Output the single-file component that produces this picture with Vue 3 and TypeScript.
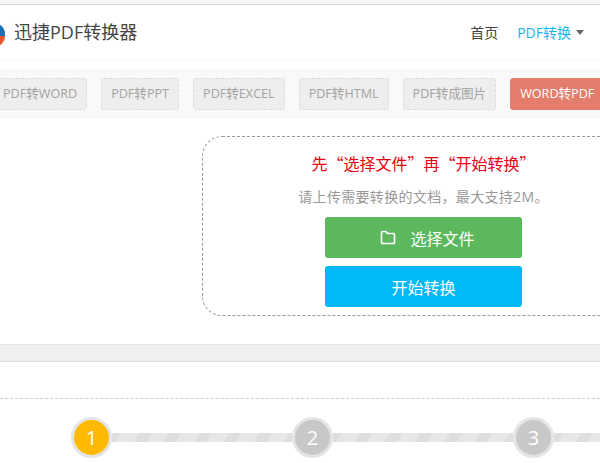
<script setup lang="ts">
const tabs = ['PDF转WORD', 'PDF转PPT', 'PDF转EXCEL', 'PDF转HTML', 'PDF转成图片']
const steps = [1, 2, 3]
</script>

<template>
  <div class="page">
    <div class="topbar"></div>
    <header class="header">
      <div class="brand">
        <svg class="logo" width="22" height="22" viewBox="0 0 22 22">
          <circle cx="11" cy="11" r="11" fill="#1a6fb5" />
          <path d="M0 13 A11 11 0 0 0 22 13 Z" fill="#e4572e" />
          <circle cx="11" cy="10" r="6.5" fill="#1a6fb5" />
        </svg>
        <span class="title">迅捷PDF转换器</span>
      </div>
      <nav class="nav">
        <span class="nav-home">首页</span>
        <span class="nav-active">PDF转换</span>
        <span class="caret"></span>
      </nav>
    </header>
    <div class="tabs">
      <span v-for="t in tabs" :key="t" class="tab">{{ t }}</span>
      <span class="tab tab-on">WORD转PDF</span>
    </div>
    <section class="panel">
      <p class="headline">先“选择文件”再“开始转换”</p>
      <p class="hint">请上传需要转换的文档，最大支持2M。</p>
      <button class="btn btn-green">
        <svg width="16" height="15" viewBox="0 0 16 15" fill="none" stroke="#fff" stroke-width="1.7" stroke-linejoin="round">
          <path d="M1.5 2.5 Q1.5 1.5 2.5 1.5 H6 L7.5 3.5 H13.5 Q14.5 3.5 14.5 4.5 V12.5 Q14.5 13.5 13.5 13.5 H2.5 Q1.5 13.5 1.5 12.5 Z" />
        </svg>
        <span>选择文件</span>
      </button>
      <button class="btn btn-blue">开始转换</button>
    </section>
    <div class="band"></div>
    <div class="dotted"></div>
    <div class="steps">
      <template v-for="s in steps" :key="s">
        <span class="circle" :class="{ current: s === 1 }">{{ s }}</span>
        <span class="bar"></span>
      </template>
    </div>
  </div>
</template>

<style>
html, body { margin: 0; background: #fff; overflow: hidden; }
</style>

<style scoped>
.page {
  width: 600px;
  height: 463px;
  overflow: hidden;
  background: #fff;
  font-family: "Open Sans", "Noto Sans CJK SC", sans-serif;
}
.topbar {
  height: 4px;
  background: #f6f6f6;
  border-bottom: 1px solid #d9d9d9;
}
.header {
  height: 54px;
  display: flex;
  justify-content: space-between;
  align-items: center;
  padding-right: 16px;
  border-bottom: 1px solid #f7f7f7;
}
.brand { display: flex; align-items: center; margin-left: -17px; }
.logo { flex: none; margin-right: 9px; margin-top: 3px; }
.title { font-size: 18px; color: #444; line-height: 24px; }
.nav { display: flex; align-items: center; font-size: 14px; }
.nav-home { color: #444; margin-right: 19px; }
.nav-active { color: #18b4f0; }
.caret {
  width: 0;
  height: 0;
  margin-left: 5px;
  margin-top: 1px;
  border-left: 4px solid transparent;
  border-right: 4px solid transparent;
  border-top: 5px solid #666;
}
.tabs {
  margin-top: 9px;
  height: 50px;
  box-sizing: border-box;
  padding: 9px 0 0 0;
  background: #f9f9f9;
  display: flex;
  align-items: flex-start;
  gap: 14px;
  overflow: hidden;
}
.tab {
  flex: none;
  box-sizing: border-box;
  height: 32px;
  line-height: 30px;
  padding: 0 9px;
  font-size: 12.6px;
  color: #a3a3a3;
  background: #eee;
  border: 1px dashed #ddd;
  border-radius: 3px;
}
.tab:first-child { margin-left: -7px; }
.tab-on {
  background: #e57d6c;
  border: 1px solid #e57d6c;
  color: #fff;
}
.panel {
  box-sizing: border-box;
  width: 443px;
  height: 180px;
  margin: 17px 0 0 202px;
  border: 1px dashed #999;
  border-radius: 20px;
  display: flex;
  flex-direction: column;
  align-items: center;
}
.headline {
  margin: 14px 0 0;
  font-family: "Noto Sans CJK SC", sans-serif;
  font-size: 16px;
  line-height: 24px;
  color: #e60012;
}
.hint {
  margin: 12px 0 0;
  font-size: 14px;
  letter-spacing: 0.33px;
  line-height: 20px;
  color: #999;
}
.btn {
  box-sizing: border-box;
  width: 197px;
  height: 41px;
  border: none;
  border-radius: 3px;
  color: #fff;
  font-family: inherit;
  font-size: 16px;
  padding: 0;
  display: flex;
  align-items: center;
  justify-content: center;
}
.btn-green { margin-top: 10px; background: #5cb85c; gap: 14px; padding-left: 8px; }
.btn-blue { margin-top: 8px; background: #00b9f5; }
.band {
  margin-top: 28px;
  box-sizing: border-box;
  height: 18px;
  background: #f0f0f0;
  border-top: 1px solid #e4e4e4;
  border-bottom: 1px solid #ddd;
}
.dotted {
  margin-top: 36px;
  border-top: 1px dashed #ccc;
}
.steps {
  margin-top: 18px;
  padding-left: 71px;
  display: flex;
  align-items: center;
}
.circle {
  flex: none;
  box-sizing: border-box;
  width: 41px;
  height: 41px;
  border-radius: 50%;
  border: 3px solid #e4e4e4;
  background: #c8c8c8;
  color: #fff;
  font-size: 20px;
  line-height: 35px;
  text-align: center;
}
.circle.current { background: #ffb900; }
.bar {
  flex: none;
  width: 180px;
  height: 9px;
  background: repeating-linear-gradient(-60deg, #dedede 0 7px, #e7e7e7 7px 22.4px, #dedede 22.4px 26px);
}
</style>
